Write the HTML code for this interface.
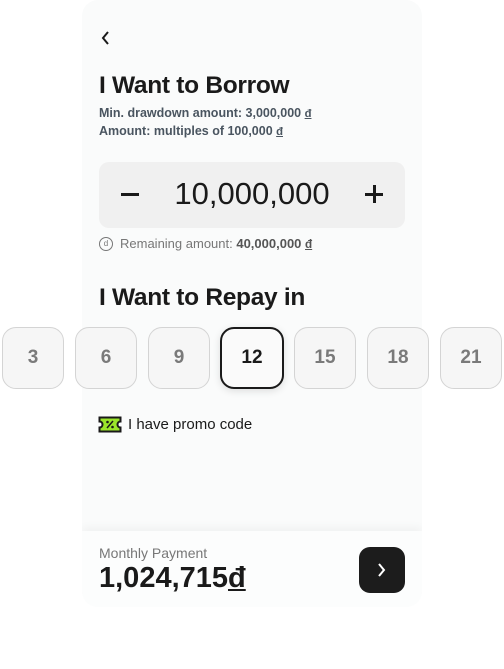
<!DOCTYPE html>
<html><head><meta charset="utf-8"><style>
*{margin:0;padding:0;box-sizing:border-box}
body{width:504px;height:669px;background:#fff;font-family:"Liberation Sans",sans-serif;position:relative;overflow:hidden;color:#1c1c1c}
.card{position:absolute;left:82px;top:0;width:340px;height:607px;background:#fafbfb;border-radius:16px;overflow:hidden}
.abs{position:absolute}
.h1{font-size:24.5px;font-weight:bold;letter-spacing:-0.3px;color:#1a1a1a}
.sub{font-size:12.5px;color:#4a5560;font-weight:bold}
.d{text-decoration:underline;text-underline-offset:1px;font-size:0.9em}
.amt{left:17px;top:162px;width:306px;height:66px;background:#f0f0f0;border-radius:10px}
.chip{position:absolute;top:327px;width:62px;height:62px;border:1.5px solid #d4d4d4;border-radius:14px;background:#f6f6f6;font-size:19px;color:#7a7a7a;display:flex;align-items:center;justify-content:center;font-weight:bold}
.sel{border:2.5px solid #1a1a1a;background:#fafafa;color:#1a1a1a;box-shadow:0 2px 8px rgba(0,0,0,.12)}
.foot{left:0;top:531px;width:340px;height:76px;background:#fcfdfd;box-shadow:0 -4px 8px rgba(0,0,0,.04)}
</style></head><body>
<div class="card">
<svg class="abs" style="left:18px;top:30px" width="12" height="16" viewBox="0 0 12 16"><path d="M8 2 L3 8 L8 14" stroke="#1a1a1a" stroke-width="2" fill="none"/></svg>
<div class="abs h1" style="left:17px;top:72px">I Want to Borrow</div>
<div class="abs sub" style="left:17px;top:106px">Min. drawdown amount: 3,000,000 <span class="d">đ</span></div>
<div class="abs sub" style="left:17px;top:124px">Amount: multiples of 100,000 <span class="d">đ</span></div>
<div class="abs amt">
<div class="abs" style="left:22px;top:31px;width:18px;height:2.5px;background:#1a1a1a"></div>
<div class="abs" style="left:0;width:306px;top:14px;text-align:center;font-size:31px;color:#1a1a1a">10,000,000</div>
<div class="abs" style="left:266px;top:31px;width:18px;height:2.5px;background:#1a1a1a"></div>
<div class="abs" style="left:274px;top:23px;width:2.5px;height:18px;background:#1a1a1a"></div>
</div>
<div class="abs" style="left:17px;top:237px;width:14px;height:14px;border:1.3px solid #777;border-radius:50%;font-size:8px;text-align:center;line-height:12px;color:#777">d</div>
<div class="abs" style="left:38px;top:236px;font-size:13px;color:#777">Remaining amount: <b style="color:#555">40,000,000 <span class="d">đ</span></b></div>
<div class="abs h1" style="left:17px;top:284px">I Want to Repay in</div>
<svg class="abs" style="left:16px;top:416px" width="24" height="17" viewBox="0 0 24 17"><path d="M1.5 1.5 H22.5 V5.5 A3 3 0 0 0 22.5 11.5 V15.5 H1.5 V11.5 A3 3 0 0 0 1.5 5.5 Z" fill="#9be52a" stroke="#1a1a1a" stroke-width="2"/><path d="M9 12 L15 5" stroke="#1a1a1a" stroke-width="1.5"/><circle cx="9.5" cy="6" r="1.3" fill="#1a1a1a"/><circle cx="14.5" cy="11" r="1.3" fill="#1a1a1a"/></svg>
<div class="abs" style="left:46px;top:416px;font-size:15px;color:#1a1a1a">I have promo code</div>
<div class="abs foot">
<div class="abs" style="left:17px;top:14px;font-size:14px;color:#777">Monthly Payment</div>
<div class="abs" style="left:17px;top:31px;font-size:29px;font-weight:bold;color:#1a1a1a">1,024,715<span style="text-decoration:underline">đ</span></div>
<div class="abs" style="left:277px;top:16px;width:46px;height:46px;background:#1c1c1c;border-radius:11px">
<svg class="abs" style="left:17px;top:15px" width="12" height="16" viewBox="0 0 12 16"><path d="M3 2 L8 8 L3 14" stroke="#fff" stroke-width="2" fill="none"/></svg></div>
</div>
</div>
<div class="chip" style="left:2px">3</div>
<div class="chip" style="left:75px">6</div>
<div class="chip" style="left:148px">9</div>
<div class="chip sel" style="left:220px;width:64px">12</div>
<div class="chip" style="left:294px">15</div>
<div class="chip" style="left:367px">18</div>
<div class="chip" style="left:440px">21</div>
</body></html>
